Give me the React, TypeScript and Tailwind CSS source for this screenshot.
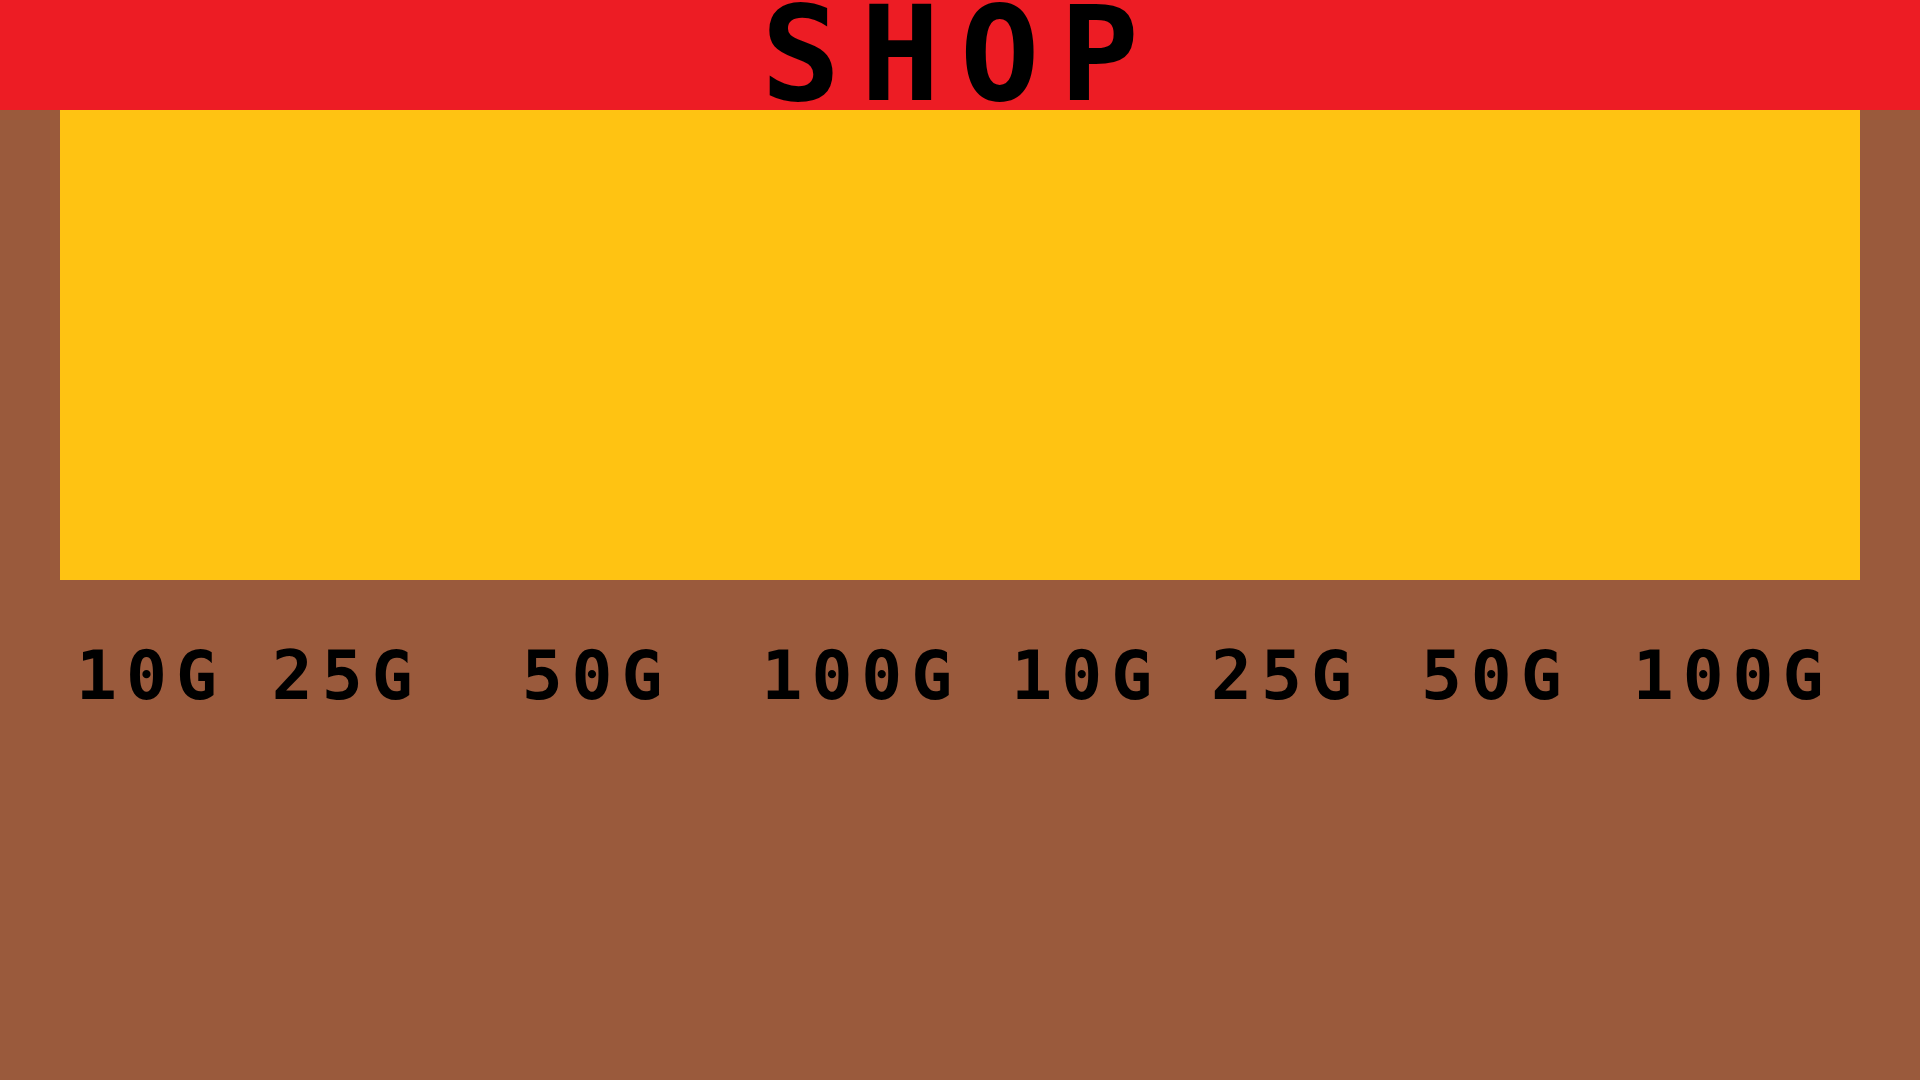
const prices = [
  { label: "10G", ml: "ml-[76px]" },
  { label: "25G", ml: "ml-[46px]" },
  { label: "50G", ml: "ml-[100px]" },
  { label: "100G", ml: "ml-[90px]" },
  { label: "10G", ml: "ml-[50px]" },
  { label: "25G", ml: "ml-[50px]" },
  { label: "50G", ml: "ml-[60px]" },
  { label: "100G", ml: "ml-[62px]" },
];

export default function App() {
  return (
    <div className="w-full h-[1080px] overflow-hidden bg-[#9a5a3c] flex flex-col font-['DejaVu_Sans_Mono',monospace]">
      {/* Title bar */}
      <header className="h-[110px] bg-[#ed1c24] overflow-hidden">
        <h1 className="text-center text-[132px] leading-[109px] font-bold tracking-[20px] text-black">
          SHOP
        </h1>
      </header>

      {/* Display area */}
      <div className="mx-[60px] h-[470px] bg-[#ffc312]" />

      {/* Price row */}
      <div className="flex mt-[62px]">
        {prices.map((p, i) => (
          <span
            key={i}
            className={`${p.ml} text-[68px] leading-[68px] font-bold tracking-[9px] text-black`}
          >
            {p.label}
          </span>
        ))}
      </div>
    </div>
  );
}
